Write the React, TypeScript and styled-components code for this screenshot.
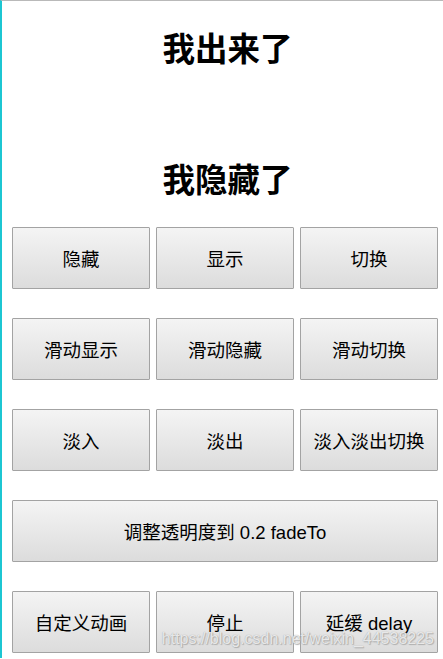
import React from "react";
import styled, { createGlobalStyle } from "styled-components";

const GlobalStyle = createGlobalStyle`
  html, body {
    margin: 0;
    padding: 0;
    background: #fff;
  }
  body {
    font-family: "Liberation Sans", "Noto Sans CJK SC", sans-serif;
  }
`;

const buttons = [
  { label: "隐藏" },
  { label: "显示" },
  { label: "切换" },
  { label: "滑动显示" },
  { label: "滑动隐藏" },
  { label: "滑动切换" },
  { label: "淡入" },
  { label: "淡出" },
  { label: "淡入淡出切换" },
  { label: "调整透明度到 0.2 fadeTo", wide: true },
  { label: "自定义动画" },
  { label: "停止" },
  { label: "延缓 delay" },
];

const App = () => {
  return (
    <Page>
      <GlobalStyle />
      <Title>我出来了</Title>
      <Title last>我隐藏了</Title>
      <ButtonGrid>
        {buttons.map((b) => (
          <Button key={b.label} wide={b.wide}>
            {b.label}
          </Button>
        ))}
      </ButtonGrid>
      <Watermark>https://blog.csdn.net/weixin_44538225</Watermark>
    </Page>
  );
};

const Page = styled.div`
  position: relative;
  min-height: 658px;
  box-sizing: border-box;
  border-top: 1px solid #b9b9b9;
  border-left: 2px solid #1cc6d2;
  padding: 26px 0 0 10px;
  overflow: hidden;
`;

interface TitleProps {
  readonly last?: boolean;
}

const Title = styled.h1<TitleProps>`
  margin: 0 0 ${(props) => (props.last ? "29px" : "91px")} 0;
  padding-left: 0;
  height: 40px;
  line-height: 40px;
  font-family: "Noto Sans CJK SC", sans-serif;
  font-size: 32.5px;
  font-weight: 700;
  text-align: center;
  color: #000;
`;

const ButtonGrid = styled.div`
  display: grid;
  grid-template-columns: repeat(3, 138px);
  column-gap: 6px;
  row-gap: 29px;
`;

interface ButtonProps {
  readonly wide?: boolean;
}

const Button = styled.button<ButtonProps>`
  grid-column: ${(props) => (props.wide ? "1 / span 3" : "auto")};
  height: 62px;
  margin: 0;
  padding: 0;
  box-sizing: border-box;
  border: 1px solid #a3a3a3;
  border-radius: 1px;
  background: linear-gradient(#f4f4f4, #dcdcdc);
  font-family: "Liberation Sans", "Noto Sans CJK SC", sans-serif;
  font-size: 18.5px;
  color: #000;
  cursor: pointer;
`;

const Watermark = styled.div`
  position: absolute;
  right: 9px;
  bottom: 10px;
  font-family: "Liberation Sans", sans-serif;
  font-size: 16px;
  color: rgba(255, 255, 255, 0.75);
  text-shadow: 0 0 1px #9a9a9a, 1px 1px 1px #b0b0b0;
  pointer-events: none;
`;

export default App;
